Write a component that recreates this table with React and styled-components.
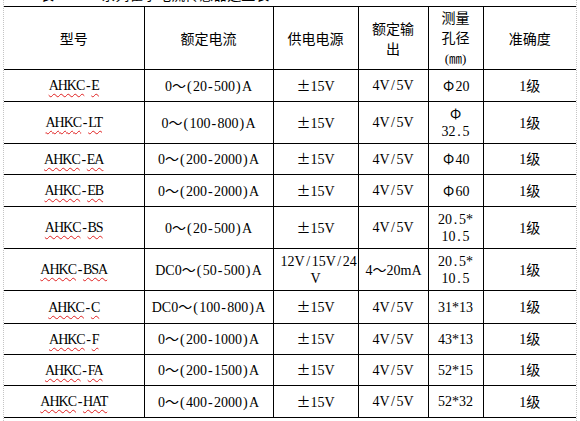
import React from "react";
import styled, { createGlobalStyle } from "styled-components";

const GlobalStyle = createGlobalStyle`
  html, body {
    margin: 0;
    padding: 0;
    background: #fff;
  }
`;

const header = [
  ["型号"],
  ["额定电流"],
  ["供电电源"],
  ["额定输", "出"],
  ["测量", "孔径", "(㎜)"],
  ["准确度"],
];

const rows = [
  { h: 32, cells: ["AHKC-E", "0～(20-500)A", "±15V", "4V/5V", "Φ20", "1级"] },
  { h: 42, cells: ["AHKC-LT", "0～(100-800)A", "±15V", "4V/5V", ["Φ", "32.5"], "1级"] },
  { h: 31, cells: ["AHKC-EA", "0～(200-2000)A", "±15V", "4V/5V", "Φ40", "1级"] },
  { h: 32, cells: ["AHKC-EB", "0～(200-2000)A", "±15V", "4V/5V", "Φ60", "1级"] },
  { h: 42, cells: ["AHKC-BS", "0～(20-500)A", "±15V", "4V/5V", ["20.5*", "10.5"], "1级"] },
  { h: 42, cells: ["AHKC-BSA", "DC0～(50-500)A", ["12V/15V/24", "V"], "4～20mA", ["20.5*", "10.5"], "1级"] },
  { h: 33, cells: ["AHKC-C", "DC0～(100-800)A", "±15V", "4V/5V", "31*13", "1级"] },
  { h: 31, cells: ["AHKC-F", "0～(200-1000)A", "±15V", "4V/5V", "43*13", "1级"] },
  { h: 31, cells: ["AHKC-FA", "0～(200-1500)A", "±15V", "4V/5V", "52*15", "1级"] },
  { h: 32, cells: ["AHKC-HAT", "0～(400-2000)A", "±15V", "4V/5V", "52*32", "1级"] },
];

const widths = [140, 129, 85, 70, 55, 93];

const WIDE = "±Φ～级";
const HALF = ".-*/()";

// the doc font is a fixed grid: full width glyphs take 1em, punctuation half
function renderText(str) {
  return str.split(/([±Φ～级.\-*/()])/).map((part, i) => {
    if (part === "") return null;
    if (WIDE.includes(part)) return <Wide key={i}>{part}</Wide>;
    if (HALF.includes(part)) return <Half key={i}>{part}</Half>;
    return <span key={i}>{part}</span>;
  });
}

function App() {
  return (
    <>
      <GlobalStyle />
      <Page>
        <CaptionStrip>
          <Caption>表1  AHKC系列霍尔电流传感器选型表</Caption>
        </CaptionStrip>
        <Table>
          <colgroup>
            {widths.map((w, i) => (
              <Col key={i} $w={w} />
            ))}
          </colgroup>
          <tbody>
            <tr style={{ height: 62 }}>
              {header.map((lines, i) => (
                <HeadCell key={i}>
                  {lines.map((l, j) => (
                    <Line key={j}>
                      {l === "(㎜)" ? (
                        <Unit>
                          (<UnitMm>㎜</UnitMm>)
                        </Unit>
                      ) : (
                        l
                      )}
                    </Line>
                  ))}
                </HeadCell>
              ))}
            </tr>
            {rows.map((row, r) => (
              <tr key={r} style={{ height: row.h }}>
                {row.cells.map((c, i) => (
                  <Cell key={i}>
                    {i === 0 ? (
                      <Model>{renderText(c)}</Model>
                    ) : Array.isArray(c) ? (
                      c.map((l, j) => <Line key={j}>{renderText(l)}</Line>)
                    ) : (
                      renderText(c)
                    )}
                  </Cell>
                ))}
              </tr>
            ))}
          </tbody>
        </Table>
      </Page>
    </>
  );
}

const Page = styled.div`
  box-sizing: border-box;
  margin-left: 3px;
  width: 574px;
  height: 421px;
  border-left: 1px dotted #c4c4c4;
  border-right: 1px dotted #c4c4c4;
  overflow: hidden;
`;

const CaptionStrip = styled.div`
  height: 6px;
  display: flex;
  align-items: flex-end;
  overflow: hidden;
  padding: 0 0 5px 36px;
  box-sizing: border-box;
`;

const Caption = styled.div`
  font-family: "Noto Sans CJK SC", sans-serif;
  font-size: 14px;
  line-height: 14px;
  color: #000;
  white-space: nowrap;
  flex-shrink: 0;
`;

const Table = styled.table`
  width: 572px;
  table-layout: fixed;
  border-collapse: collapse;
  color: #000;
`;

const Col = styled.col`
  width: ${(p) => p.$w}px;
`;

const Cell = styled.td`
  border: 1px solid #000;
  padding: 0 7px;
  text-align: center;
  vertical-align: middle;
  font-family: "Liberation Serif", "Noto Sans CJK SC", serif;
  font-size: 14px;
  line-height: 17px;
  white-space: nowrap;

  &:first-child {
    border-left: none;
  }
  &:last-child {
    border-right: none;
  }
`;

const HeadCell = styled(Cell)`
  font-family: "Noto Sans CJK SC", sans-serif;
  font-size: 14px;
  line-height: 20px;
`;

const Line = styled.div`
  display: block;
`;

const Wide = styled.span`
  display: inline-block;
  width: 14px;
  text-align: center;
  font-family: "Noto Sans CJK SC", sans-serif;
  font-size: 14px;
`;

const Half = styled.span`
  display: inline-block;
  width: 7px;
  text-align: center;
`;

const Model = styled.span`
  letter-spacing: -1px;
  text-decoration: underline wavy #e02020;
  text-decoration-thickness: 1px;
  text-underline-offset: 3px;
`;

const Unit = styled.span`
  font-family: "Liberation Serif", serif;
  font-size: 13px;
`;

const UnitMm = styled.span`
  font-family: "Noto Sans CJK SC", sans-serif;
  font-size: 13px;
`;

export default App;
